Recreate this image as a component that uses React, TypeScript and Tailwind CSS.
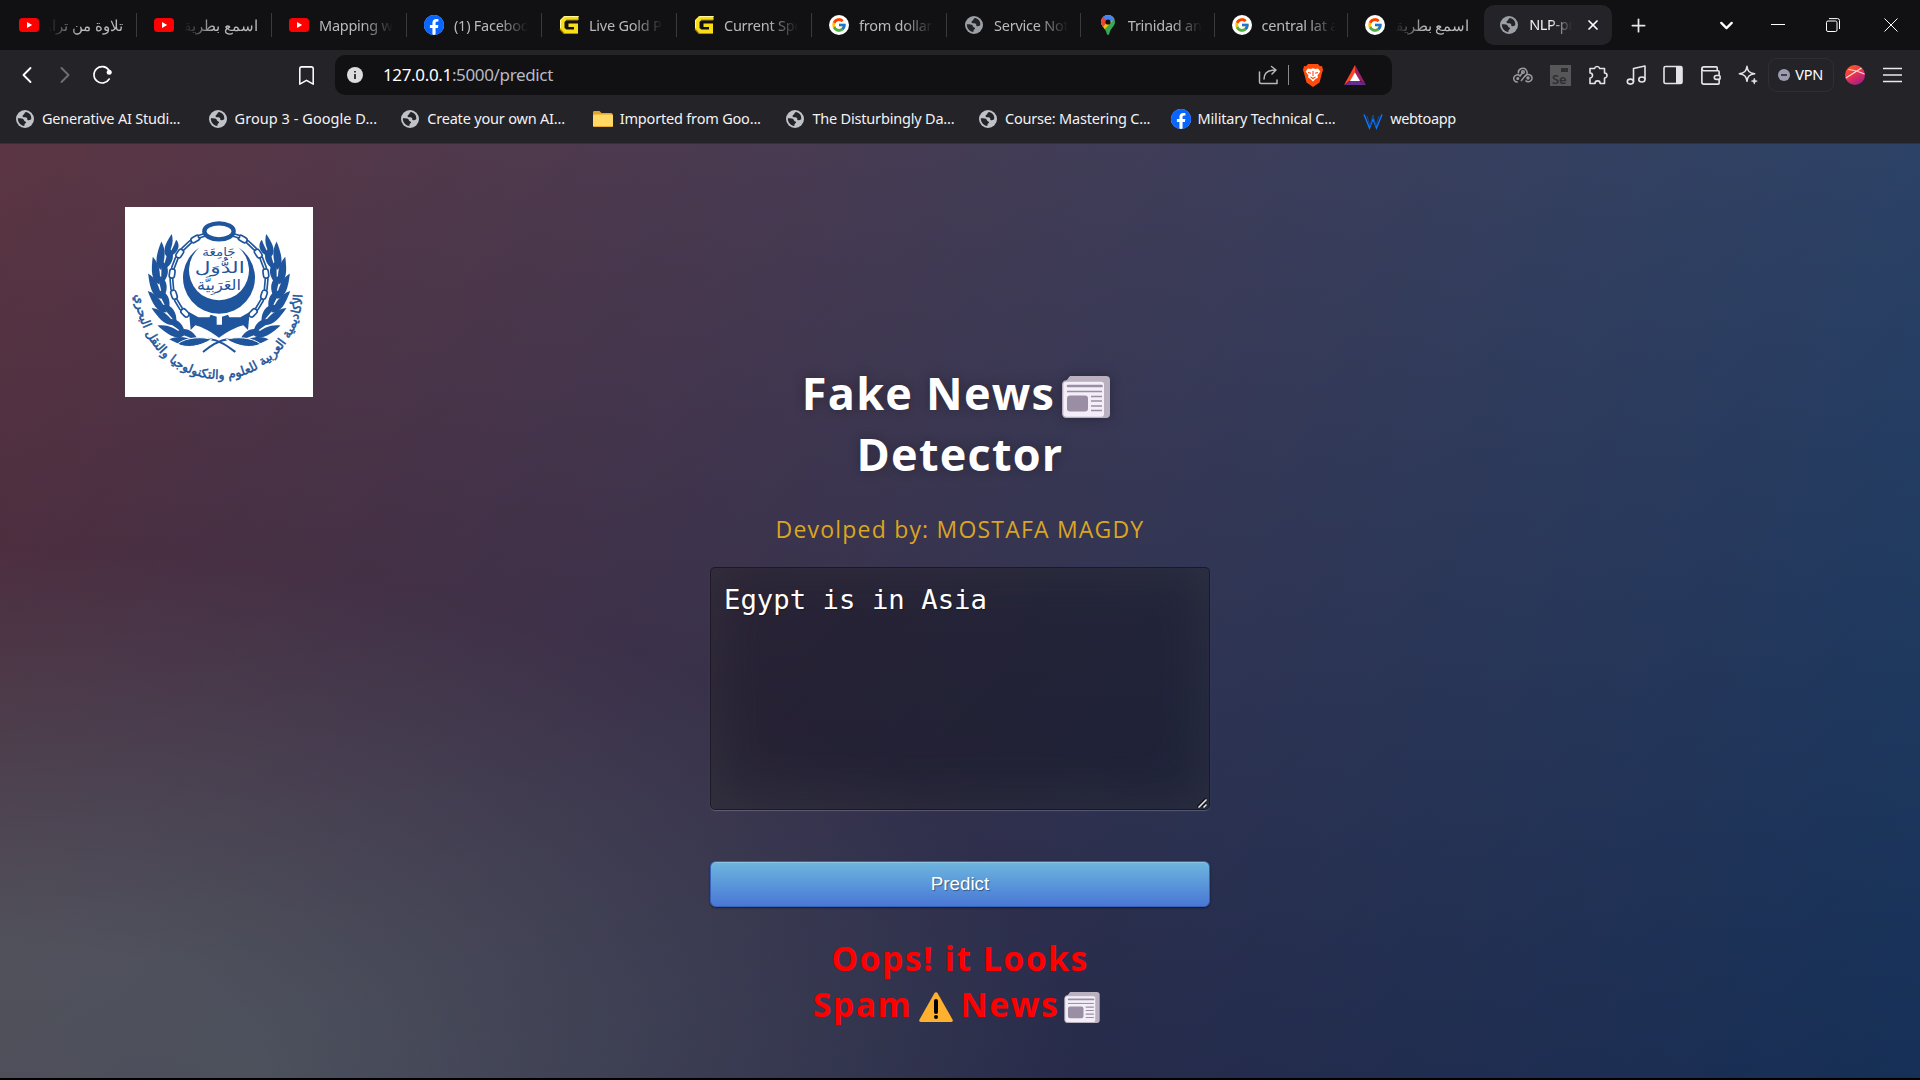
import React, { ReactNode } from "react";
import { FcGoogle } from "react-icons/fc";
import { BsFacebook } from "react-icons/bs";
import { ChevronLeft, ChevronRight, ChevronDown, X, Plus, Bookmark, Wallet } from "lucide-react";

const Globe = ({ className = "text-[#9aa0a6]" }: { className?: string }) => (
  <svg viewBox="0 0 20 20" className={`h-[18px] w-[18px] shrink-0 ${className}`}>
    <circle cx="10" cy="10" r="10" fill="currentColor" />
    <path
      d="M11.500 2.200c-1.800.3-1.900 1.300-2.300 2.200-.4.900-1.700.8-1.900 1.900-.2 1.300 1 1.700 2.100 1.700 1.200.1 2.600 0 3 1.200.3.900-.2 1.500.5 1.900 1 .6 2.700-.2 4-.9C17.600 6.200 15 3.200 11.500 2.200zM2 9.300c1.600-.1 4.500-.1 5.800.7 1.200.8.900 1.900 1.900 2.500.8.500 1.600.5 1.500 1.500-.1.900-1.400 1-1.700 1.800-.2.700 0 1.500-.2 2.100C5.200 17.500 2 14 2 9.300z"
      fill="#242328"
    />
  </svg>
);

const YouTube = () => (
  <svg viewBox="0 0 20 16" className="h-4 w-5 shrink-0">
    <rect x="0" y="1" width="20" height="14" rx="3.500" fill="#f00" />
    <path d="M8 5l5.200 3L8 11z" fill="#fff" />
  </svg>
);

const Facebook = () => (
  <span className="flex h-5 w-5 shrink-0 rounded-full bg-white">
    <BsFacebook className="h-5 w-5 text-[#0866ff]" />
  </span>
);

const GoldG = () => (
  <svg viewBox="0 0 20 20" className="h-5 w-5 shrink-0">
    <path d="M19.500 1H5L1 5v9l4 4.500h14V8.500h-9.500v3.500H15v2.500H7.500L5.500 13V7L7.500 5H19.500z" fill="#f9dd16" />
    <path d="M19.500 1.500H6L1.500 5.500V13" fill="none" stroke="#fff6a0" strokeWidth="1" />
    <path d="M1 14l4 4.500h14M7 5h12" fill="none" stroke="#b08c00" strokeWidth="1.200" />
  </svg>
);

const Google = () => (
  <span className="flex h-5 w-5 shrink-0 items-center justify-center rounded-full bg-white">
    <FcGoogle className="h-4 w-4" />
  </span>
);

const MapPin = () => (
  <svg viewBox="0 0 20 20" className="h-5 w-5 shrink-0">
    <clipPath id="pin">
      <path d="M10 0a7 7 0 0 1 7 7c0 4-3.600 5.500-5 9.500-.6 1.700-1 3.500-2 3.500s-1.400-1.800-2-3.500C6.600 12.500 3 11 3 7a7 7 0 0 1 7-7z" />
    </clipPath>
    <g clipPath="url(#pin)">
      <rect width="20" height="20" fill="#34a853" />
      <path d="M0 0h20L5 16 0 12z" fill="#fbbc04" />
      <path d="M0 0h8l2 6-5 6-5-3z" fill="#ea4335" />
      <path d="M5 0h15v4l-6.500 2L10 7 6 3z" fill="#4285f4" />
    </g>
    <circle cx="10" cy="7" r="2.600" fill="#111114" />
  </svg>
);

const Folder = () => (
  <svg viewBox="0 0 20 16" className="h-4 w-5 shrink-0">
    <path d="M0 1.500C0 .7.600 0 1.500 0h5l2 2H18a1.800 1.800 0 0 1 1.800 1.800V14H0z" fill="#e0a526" />
    <rect x="0" y="3.500" width="20" height="12.500" rx="1.500" fill="#ffd866" />
    <path d="M.5 15.500h19" stroke="#e3a92e" />
  </svg>
);

type TabInfo = { icon: ReactNode; title: string; rtl?: boolean };
const tabs: TabInfo[] = [
  { icon: <YouTube />, title: "تلاوة من تراويح", rtl: true },
  { icon: <YouTube />, title: "اسمع بطريقة", rtl: true },
  { icon: <YouTube />, title: "Mapping with" },
  { icon: <Facebook />, title: "(1) Facebook" },
  { icon: <GoldG />, title: "Live Gold Price" },
  { icon: <GoldG />, title: "Current Spot" },
  { icon: <Google />, title: "from dollar to" },
  { icon: <Globe />, title: "Service Not" },
  { icon: <MapPin />, title: "Trinidad and" },
  { icon: <Google />, title: "central lat am" },
  { icon: <Google />, title: "اسمع بطريقة", rtl: true },
];

const TabItem = ({ icon, title, rtl, narrow, last }: TabInfo & { narrow: boolean; last: boolean }) => (
  <div
    className={`flex h-6 shrink-0 items-center pl-[17px] ${narrow ? "w-[133.800px]" : "w-[135px]"} ${last ? "" : "border-r border-[#3a3a3e]"}`}
  >
    <span className="flex w-5 justify-center">{icon}</span>
    <span
      dir={rtl ? "rtl" : "ltr"}
      className={`ml-[10px] w-[74px] overflow-hidden whitespace-nowrap text-[14.500px] leading-6 tracking-[-0.250px] text-[#b9b9bd] ${
        rtl ? "[mask-image:linear-gradient(to_left,#000_60%,transparent)]" : "[mask-image:linear-gradient(to_right,#000_60%,transparent)]"
      }`}
    >
      {title}
    </span>
  </div>
);

const TabStrip = () => (
  <div className="flex h-[50px] items-center bg-[#111114] pl-[2px]">
    {tabs.map((t, i) => (
      <TabItem key={i} {...t} narrow={i > 6} last={i === tabs.length - 1} />
    ))}
    <div className="ml-[2px] flex h-10 w-[128px] shrink-0 items-center rounded-[10px] bg-[#242328] pl-4">
      <Globe />
      <span className="ml-[11px] w-[43px] overflow-hidden whitespace-nowrap text-[14.500px] tracking-[-0.350px] text-[#f0f0f2] [mask-image:linear-gradient(to_right,#000_50%,transparent)]">
        NLP-project
      </span>
      <X className="ml-[13px] h-4 w-4 text-white" strokeWidth={2.6} />
    </div>
    <Plus className="ml-4 h-[21px] w-[21px] text-[#e6e6e8]" strokeWidth={2} />
    <ChevronDown className="ml-[67px] h-[21px] w-[21px] text-white" strokeWidth={2.6} />
    <svg viewBox="0 0 14 14" className="ml-[34px] h-[14px] w-[14px] fill-none stroke-white">
      <path d="M0 6.500h14" />
    </svg>
    <svg viewBox="0 0 14 14" className="ml-[41px] h-[14px] w-[14px] fill-none stroke-white">
      <rect x=".5" y="3" width="10.500" height="10.500" rx="1.500" />
      <path d="M3 .6h8.500a2 2 0 0 1 2 2V11" />
    </svg>
    <svg viewBox="0 0 14 14" className="ml-[44px] h-[14px] w-[14px] fill-none stroke-white">
      <path d="M.5.5l13 13M13.500.5l-13 13" />
    </svg>
  </div>
);

const Cell = ({ children }: { children: ReactNode }) => (
  <div className="flex w-[37.600px] shrink-0 items-center justify-center text-[#e4e4e6]">{children}</div>
);

const Toolbar = () => (
  <div className="flex h-[50px] items-center">
    <ChevronLeft className="ml-[13px] h-7 w-7 text-white" strokeWidth={1.6} />
    <ChevronRight className="ml-[10px] h-7 w-7 text-[#6f6f74]" strokeWidth={1.6} />
    <svg viewBox="0 0 20 20" className="ml-[13px] h-5 w-5">
      <path d="M16.800 5A8.200 8.200 0 1 0 17.200 14" fill="none" stroke="#fff" strokeWidth="1.600" strokeLinecap="round" />
      <circle cx="17.200" cy="7.300" r="2.500" fill="#fff" />
    </svg>
    <Bookmark className="ml-[183px] h-[23px] w-[23px] text-white" strokeWidth={1.6} />
    <div className="ml-[17px] flex h-10 w-[1057px] shrink-0 items-center rounded-[10px] bg-[#111114] pl-3">
      <svg viewBox="0 0 16 16" className="h-4 w-4">
        <circle cx="8" cy="8" r="8" fill="#dcdce0" />
        <path d="M8 7v5M8 4v1.600" stroke="#111114" strokeWidth="1.600" />
      </svg>
      <span className="ml-5 w-[875px] text-[17px] tracking-[-0.350px] text-[#b8bac4]">
        <span className="text-white">127.0.0.1</span>:5000/predict
      </span>
      <svg viewBox="0 0 20 20" className="h-5 w-5 fill-none stroke-[#b8b8bc]" strokeWidth="1.500" strokeLinecap="round" strokeLinejoin="round">
        <path d="M1.500 7v10a1.500 1.500 0 0 0 1.500 1.500h16V15M6 14C6 8 9 5 17.500 5M13.500 1.500L18 5l-4 4" />
      </svg>
      <span className="ml-[10px] h-5 w-px bg-[#8a8a8e]" />
      <svg viewBox="0 0 20 23" className="ml-[14px] h-[23px] w-5">
        <path d="M5 0h10l2 2.300 2-.3 1 4-1 3-2.500 9.500L10 23l-6.500-4.500L1 9 0 6l1-4 2 .3z" fill="#ff4c0c" />
        <path d="M5 4.500l2.500.5 2.500-.8 2.500.8 2.500-.5 2.300 3-2.800 4 .5 2-2.500 1.500L10 17.500 7.500 15 5 13.500l.5-2-2.800-4z" fill="#fff" />
        <path d="M5 8.500l3 .8M15 8.500l-3 .8M10 7v5M7.500 13l2.500 1.500 2.500-1.500" stroke="#ff4c0c" fill="none" strokeWidth="1.100" />
      </svg>
      <svg viewBox="0 0 22 20" className="ml-[21px] h-5 w-[22px]">
        <path d="M11 0L0 20l11-8z" fill="#ff4724" />
        <path d="M11 0l11 20-11-8z" fill="#9e1f63" />
        <path d="M0 20h22l-11-7z" fill="#662d91" />
        <path d="M11 7.500l5 8.500H6z" fill="#fff" />
      </svg>
    </div>
    <div className="ml-[112px] flex items-center">
      <Cell>
        <svg viewBox="0 0 20 16" className="h-4 w-5 fill-none stroke-[#9b9b9f]" strokeWidth="1.500">
          <path d="M5.500 6.500a4.300 4.300 0 1 1 6 3L8 14M4.800 15A3.600 3.600 0 1 1 7 9l3-4" />
          <circle cx="10" cy="5" r="1.300" />
          <path d="M12 9.500a3.700 3.700 0 1 1 .5 4" />
          <circle cx="15" cy="11" r="1" />
          <circle cx="4.800" cy="11.500" r=".8" />
        </svg>
      </Cell>
      <Cell>
        <div className="relative flex h-[21px] w-[21px] items-end bg-[#57575a] pl-[2px] text-[13px] leading-[14px] font-semibold text-[#2e2e32]">
          Se
          <span className="absolute top-[3px] right-[3px] h-1 w-[7px] bg-[#2e2e32]" />
        </div>
      </Cell>
      <Cell>
        <svg viewBox="0 0 20 20" className="h-5 w-5" fill="none" stroke="currentColor" strokeWidth="1.600" strokeLinejoin="round">
          <path d="M2 3.500h4.500a2.700 2.700 0 0 1 5.200 0h4.800V8a2.500 2.500 0 0 1 0 5v5.500h-4.300a2.600 2.600 0 0 0-5.200 0H2V13a2.500 2.500 0 0 0 0-5z" />
        </svg>
      </Cell>
      <Cell>
        <svg viewBox="0 0 20 20" className="h-5 w-5" fill="none" stroke="currentColor" strokeWidth="1.600" strokeLinejoin="round">
          <path d="M7.500 16.500V3.500L19 1v13.500" />
          <ellipse cx="4.400" cy="16.600" rx="3.100" ry="2.500" />
          <ellipse cx="15.900" cy="14.500" rx="3.100" ry="2.500" />
        </svg>
      </Cell>
      <Cell>
        <svg viewBox="0 0 20 20" className="h-5 w-5">
          <rect x="1" y="1.500" width="18" height="17" rx="1.500" fill="none" stroke="currentColor" strokeWidth="1.600" />
          <rect x="13" y="2" width="6" height="16" fill="currentColor" />
        </svg>
      </Cell>
      <Cell>
        <Wallet className="h-[23px] w-[23px]" strokeWidth={1.7} />
      </Cell>
      <Cell>
        <svg viewBox="0 0 20 20" className="h-5 w-5" fill="none" stroke="currentColor" strokeWidth="1.500" strokeLinejoin="round">
          <path d="M9 1.300c.6 5 2 6.600 7.700 7.400C11 9.600 9.600 11.200 9 16.300 8.200 11.200 6.800 9.600 1.300 8.700 6.800 7.900 8.200 6.300 9 1.300z" />
          <path d="M16.300 13l.8 2.200 2.200.9-2.200.9-.8 2.200-.8-2.200-2.200-.9 2.200-.9z" fill="currentColor" strokeWidth=".5" />
        </svg>
      </Cell>
    </div>
    <div className="ml-[1px] flex h-[34px] w-[66px] shrink-0 items-center rounded-[9px] border border-[#302f35] pl-[9px] text-[14.500px] tracking-[-0.200px] text-white">
      <svg viewBox="0 0 12 12" className="mr-[5px] h-3 w-3">
        <circle cx="6" cy="6" r="6" fill="#9d9bb0" />
        <path d="M3 6h6" stroke="#242328" strokeWidth="1.500" />
      </svg>
      VPN
    </div>
    <svg viewBox="0 0 20 20" className="ml-[11px] h-5 w-5 shrink-0">
      <defs>
        <linearGradient id="av" x1="0" y1="0" x2=".6" y2="1">
          <stop offset="0" stopColor="#ff6a1a" />
          <stop offset=".5" stopColor="#f0344c" />
          <stop offset="1" stopColor="#a81e86" />
        </linearGradient>
      </defs>
      <circle cx="10" cy="10" r="10" fill="url(#av)" />
      <path d="M.8 13L16.500 3M3.500 4.500Q10 5 19.500 9" stroke="#ffe2d8" strokeWidth="1.200" fill="none" />
    </svg>
    <svg viewBox="0 0 19 16" className="ml-[18px] h-4 w-[19px] shrink-0">
      <path d="M0 1.500h19M0 8h19M0 14.500h19" stroke="#e9e9eb" strokeWidth="1.500" />
    </svg>
  </div>
);

const WLogo = () => (
  <svg viewBox="0 0 20 18" className="mt-1 h-[18px] w-5 shrink-0 fill-none" strokeWidth="1.400">
    <path d="M1 2.500l5.500 13.500L10 7l3.500 9L19 2.500" stroke="#0a78ff" />
    <path d="M4 4l3 10 3-11 3 11 3-10" stroke="#124a98" strokeWidth="1" />
  </svg>
);

const light = "text-[#bfc3c8]";
const bookmarks: { icon: ReactNode; label: string }[] = [
  { icon: <Globe className={light} />, label: "Generative AI Studi..." },
  { icon: <Globe className={light} />, label: "Group 3 - Google D..." },
  { icon: <Globe className={light} />, label: "Create your own AI..." },
  { icon: <Folder />, label: "Imported from Goo..." },
  { icon: <Globe className={light} />, label: "The Disturbingly Da..." },
  { icon: <Globe className={light} />, label: "Course: Mastering C..." },
  { icon: <Facebook />, label: "Military Technical C..." },
  { icon: <WLogo />, label: "webtoapp" },
];

const BookmarkBar = () => (
  <div className="flex h-[44px] items-center border-b border-[#333237] pb-[6px] pl-[15px]">
    {bookmarks.map((b, i) => (
      <div
        key={b.label}
        className={`flex w-[192.600px] shrink-0 items-center text-[14.500px] whitespace-nowrap text-[#f2f2f4] ${
          i === 1 ? "tracking-[0.050px]" : i === 7 ? "tracking-[-0.350px]" : "tracking-[-0.190px]"
        }`}
      >
        <span className="mr-[7px] flex w-5 justify-center">{b.icon}</span>
        {b.label}
      </div>
    ))}
  </div>
);

const Newspaper = ({ className }: { className: string }) => (
  <svg viewBox="0 0 48 42" className={className}>
    <path d="M8 0h36a4 4 0 0 1 4 4v34a4 4 0 0 1-4 4H10L4 5z" fill="#b9b0c0" />
    <rect x=".7" y="5" width="42" height="36.300" rx="3.500" fill="#f3eef8" stroke="#b9b0c0" strokeWidth="1.300" />
    <rect x="5" y="19.500" width="21" height="16" rx="3" fill="#998ea4" />
    <path d="M6 10h33.500" stroke="#998ea4" strokeWidth="2.600" strokeLinecap="round" />
    <path d="M5 15.500h35" stroke="#998ea4" strokeWidth="1.400" />
    <path d="M29 20.500h11M29 25h11M29 30h11M29 34.500h11" stroke="#998ea4" strokeWidth="1.500" />
  </svg>
);

const Warning = ({ className }: { className: string }) => (
  <svg viewBox="0 0 34 30" className={className}>
    <path d="M15.400 1.200a1.900 1.900 0 0 1 3.200 0l15 26.500c.6 1.100 0 2.300-1.300 2.300H1.700C.4 30-.2 28.800.4 27.700z" fill="#ffb02e" />
    <path d="M17 9v11" stroke="#000" strokeWidth="4" strokeLinecap="round" />
    <circle cx="17" cy="25" r="2" fill="#000" />
  </svg>
);

const CX = 297;
const polar = (r: number, deg: number, cy: number) => {
  const a = (deg * Math.PI) / 180;
  return [CX + r * Math.cos(a), cy + r * Math.sin(a)];
};

/* One half of the wreath and chain; the other half is its mirror image. */
const WreathHalf = () => (
  <g>
    {[121, 135, 149, 163, 177, 191, 205, 217].map((d, i) => {
      const [x, y] = polar(i < 2 ? 182 : 174, d, 252);
      return (
        <g key={d} transform={`translate(${x} ${y}) rotate(${d + 90}) scale(${i > 6 ? 0.95 : 1.18})`}>
          <path d="M-30 -1C-26 -24 2 -29 36 -31 22 -12 2 -3 -30 -1z" />
          <path d="M-30 3C-8 -1 10 -2 30 -9 26 14 -2 24 -30 3z" />
        </g>
      );
    })}
    {[136, 149, 162, 175, 188, 201, 214, 227, 240, 252].map((d, i) => {
      const [x, y] = polar(142, d, 240);
      return (
        <rect
          key={d}
          x={i % 2 ? -19 : -14}
          y={i % 2 ? -4 : -8}
          width={i % 2 ? 38 : 28}
          height={i % 2 ? 8 : 16}
          rx={i % 2 ? 4 : 8}
          fill="white"
          stroke="#1f559c"
          strokeWidth="5"
          transform={`translate(${x} ${y}) rotate(${d + 90})`}
        />
      );
    })}
  </g>
);

const Emblem = () => (
  <svg viewBox="15 21 564 570" className="h-[190px] w-[188px] bg-white" fill="#1f559c">
    <WreathHalf />
    <g transform="translate(594 0) scale(-1 1)">
      <WreathHalf />
    </g>
    <ellipse cx="297" cy="94" rx="44" ry="24" fill="white" stroke="#1f559c" strokeWidth="13" />
    <path d="M239 142A108 108 0 1 0 355 142 90 90 0 1 1 239 142z" />
    <path d="M207 336L235 352H268L272 344 290 350 290 374H306L306 350 324 344 328 352H361L389 336 384 390 370 376C350 380 318 398 297 413 276 398 246 380 226 376L212 390z" />
    <path d="M265 416C300 420 325 440 346 456M329 416C294 420 269 440 249 456" fill="none" stroke="#1f559c" strokeWidth="6" />
    <path d="M172 432C200 410 250 410 275 418 240 440 200 446 172 432zM422 432C394 410 344 410 319 418 354 440 394 446 422 432z" stroke="#fff" strokeWidth="3" />
    <g fontFamily="'DejaVu Sans', sans-serif" textAnchor="middle" direction="rtl">
      <text x="297" y="168" fontSize="36" textLength="100" lengthAdjust="spacingAndGlyphs">جَامِعَة</text>
      <text x="299" y="220" fontSize="46" textLength="150" lengthAdjust="spacingAndGlyphs">الدُّوَل</text>
      <text x="297" y="270" fontSize="44" textLength="132" lengthAdjust="spacingAndGlyphs">العَرَبِيَّة</text>
    </g>
    <path id="motto" d="M46 270A251 267 0 0 0 548 270" fill="none" />
    <text fontFamily="'DejaVu Sans', sans-serif" fontSize="37.500" direction="rtl" textAnchor="middle" stroke="#1f559c" strokeWidth="1.500">
      <textPath href="#motto" startOffset="50%">
        الأكاديمية العربية للعلوم والتكنولوجيا والنقل البحري
      </textPath>
    </text>
  </svg>
);

const Page = () => (
  <main className="relative h-[934px] bg-[#092756] bg-[radial-gradient(ellipse_farthest-corner_at_0%_100%,rgba(104,138,134,.42)_10%,rgba(138,114,76,0)_40%),linear-gradient(to_bottom,rgba(57,173,219,.25)_0%,rgba(42,60,87,.4)_100%),linear-gradient(135deg,#670d10_0%,#092756_100%)] font-['Open_Sans',sans-serif]">
    <div className="absolute top-[63px] left-[125px]">
      <Emblem />
    </div>
    <div className="mx-auto flex w-[500px] flex-col pt-[218px] text-center">
      <h1 className="text-[45px] leading-[61px] font-bold tracking-[1.250px] text-white [text-shadow:0_0_12px_rgba(0,0,0,.3)]">
        Fake News
        <Newspaper className="mr-[8px] ml-[7px] inline-block h-[42px] w-12 align-[-8px] drop-shadow-[0_0_6px_rgba(0,0,0,.3)]" />
        <br />
        Detector
      </h1>
      <p className="mt-[29px] text-[23px] leading-[33px] tracking-[1.200px] text-[#daa520]">Devolped by: MOSTAFA MAGDY</p>
      <div className="relative mt-[21px] h-[243px]">
        <textarea
          defaultValue="Egypt is in Asia"
          spellCheck={false}
          className="h-[243px] w-[500px] resize-none rounded-[5px] border border-black/30 bg-black/30 px-[13px] py-[14px] font-['DejaVu_Sans_Mono',monospace] text-[27.300px] leading-[36px] text-white shadow-[inset_0_-6px_56px_rgba(100,100,100,.2),0_1px_1px_rgba(255,255,255,.2)] outline-none [text-shadow:1px_1px_1px_rgba(0,0,0,.3)]"
        />
        <svg viewBox="0 0 10 10" className="absolute right-[3px] bottom-[2px] h-[10px] w-[10px]">
          <path d="M0 9L9 0M5 9l4-4" stroke="#111" strokeWidth="1.500" />
          <path d="M1.500 9.500l8-8M6.500 9.500l3-3" stroke="#e6e6e6" strokeWidth="1.500" />
        </svg>
      </div>
      <button className="mt-[51px] h-[46px] rounded-[6px] border border-[#3762bc] bg-linear-to-b from-[#6eb6de] to-[#4a77d4] font-['Liberation_Sans',sans-serif] text-[18.750px] text-white shadow-[inset_0_1px_0_rgba(255,255,255,.2),0_1px_2px_rgba(0,0,0,.5)] [text-shadow:1px_1px_1px_rgba(0,0,0,.4)]">
        Predict
      </button>
      <h2 className="mt-7 text-[33.750px] leading-[46px] font-bold tracking-[1.500px] text-[#ff0000]">
        Oops! it Looks
        <br />
        Spam
        <Warning className="mx-[7px] inline-block h-[30px] w-[34px] align-[-5px]" />
        News
        <Newspaper className="mr-[7px] ml-[5px] inline-block h-[31px] w-9 align-[-6px]" />
      </h2>
    </div>
  </main>
);

export default function App() {
  return (
    <div className="flex h-[1080px] w-[1920px] flex-col overflow-hidden bg-black font-['Noto_Sans',sans-serif]">
      <header className="h-36 shrink-0 bg-[#242328]">
        <TabStrip />
        <Toolbar />
        <BookmarkBar />
      </header>
      <Page />
    </div>
  );
}
